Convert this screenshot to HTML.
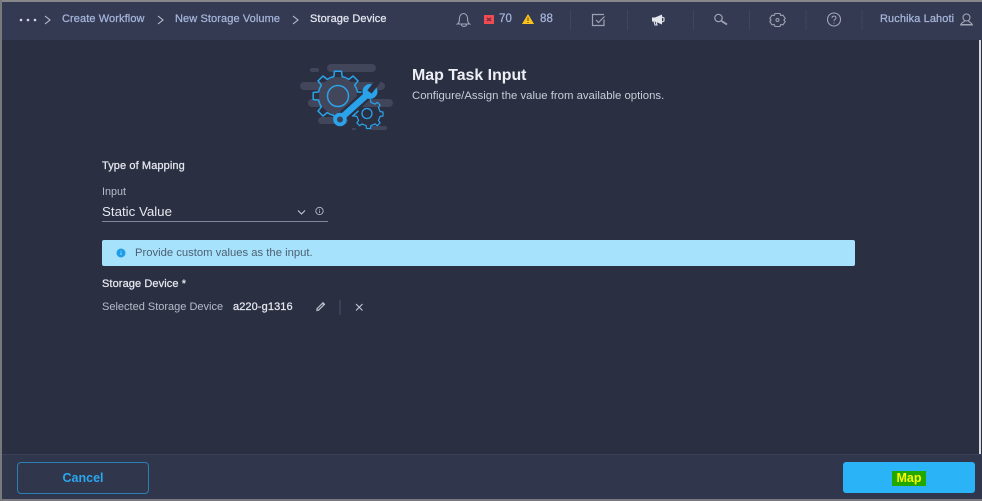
<!DOCTYPE html>
<html>
<head>
<meta charset="utf-8">
<style>
html,body{margin:0;padding:0;background:#2a2f42;}
body{width:982px;height:501px;position:relative;overflow:hidden;font-family:"Liberation Sans",sans-serif;}
.a{position:absolute;white-space:nowrap;line-height:1;}
.m{font-size:11px;letter-spacing:.1px;-webkit-text-stroke:.25px currentColor;}
svg{position:absolute;overflow:visible;}
</style>
</head>
<body>
<div class="a" style="left:0;top:0;width:982px;height:40px;background:#343a52;"></div>
<div class="a" style="left:0;top:454px;width:982px;height:47px;background:#30364b;"></div>
<div class="a" style="left:0;top:454px;width:982px;height:1px;background:#3a4057;"></div>
<div class="a" style="left:979px;top:40px;width:2px;height:414px;background:#d5d7dc;"></div>
<div class="a" style="left:0;top:0;width:982px;height:2px;background:#85878a;"></div>
<div class="a" style="left:0;top:0;width:2px;height:501px;background:#77797d;"></div>
<div class="a" style="left:0;top:499px;width:982px;height:2px;background:#77797d;"></div>

<!-- breadcrumb -->
<svg style="left:0;top:0" width="400" height="40" fill="none">
<circle cx="21" cy="20" r="1.3" fill="#d5d9e6"/><circle cx="28" cy="20" r="1.3" fill="#d5d9e6"/><circle cx="35" cy="20" r="1.3" fill="#d5d9e6"/>
<path d="M45 16l5 4-5 4M158 16l5 4-5 4M293 16l5 4-5 4" stroke="#b9bfd0" stroke-width="1.1"/>
</svg>
<div class="a m" style="left:62px;top:14px;color:#a5b5da;">Create Workflow</div>
<div class="a m" style="left:175px;top:14px;color:#a5b5da;">New Storage Volume</div>
<div class="a m" style="left:310px;top:14px;color:#e4e7f0;">Storage Device</div>

<!-- top icons -->
<svg style="left:0;top:0" width="982" height="40" fill="none">
<g stroke="#a1a6b6" stroke-width="1.1">
<path d="M457.500 24c1.500-1 2-2.500 2-6 0-2.500 2-4.500 4-4.500s4 2 4 4.500c0 3.500 .5 5 2 6z"/>
<path d="M461.500 24.500c0 2.500 5 2.500 5 0"/>
</g>
<rect x="484" y="15" width="10" height="9" fill="#ef4b52"/>
<path d="M487 18l4 3M491 18l-4 3" stroke="#6e2a3a" stroke-width="1.300"/>
<path d="M528 14l6 10h-12z" fill="#fcc419"/>
<path d="M528 17.500v3.500M528 22v1" stroke="#5b4a1a" stroke-width="1.100"/>
<path d="M570.500 10v20M627.500 10v20M693.500 10v20M749.500 10v20M806 10v20M862 10v20" stroke="#40465d" stroke-width="1"/>
<path d="M604 14.500h-11.500v11h11.500v-6" stroke="#9da2b2" stroke-width="1.200"/>
<path d="M596 20l2.500 2.500 6-6" stroke="#9da2b2" stroke-width="1.200"/>
<path d="M652 17.500h3l7-3v10l-7-3h-3z" fill="#e4e6ec"/>
<path d="M654 21.500l1 3.500h2l-1-3.500M662 17l2 1v3l-2 1" stroke="#e4e6ec" stroke-width="1.100"/>
<circle cx="718.500" cy="18" r="3.700" stroke="#a1a6b6" stroke-width="1.200"/>
<path d="M721.500 21l5.500 3.500" stroke="#a1a6b6" stroke-width="1.800"/>
<path d="M775 13.500h5l.8 2 2.200-.3 2.200 3.300-1.300 1.500 1.300 1.500-2.200 3.300-2.200-.3-.8 2h-5l-.8-2-2.200.3-2.200-3.300 1.300-1.500-1.300-1.500 2.200-3.300 2.200.3z" stroke="#9da2b2" stroke-width="1.100"/>
<circle cx="777.500" cy="20" r="1.500" stroke="#9da2b2"/>
<circle cx="834" cy="19.500" r="6.500" stroke="#a1a6b6" stroke-width="1.100"/>
<path d="M832 18c0-2.500 4-2.500 4 0 0 1.500-2 1.500-2 3M834 22.500v1" stroke="#a1a6b6" stroke-width="1"/>
<circle cx="966.500" cy="17.500" r="3.500" stroke="#a1a6b6" stroke-width="1.100"/>
<path d="M964.500 20.500c0 2-3.500 2-3.500 4h11c0-2-3.500-2-3.500-4M960 25h13" stroke="#a1a6b6" stroke-width="1.100"/>
</svg>
<div class="a m" style="left:499px;top:14px;font-size:11.500px;color:#a5b5da;">70</div>
<div class="a m" style="left:540px;top:14px;font-size:11.500px;color:#a5b5da;">88</div>
<div class="a m" style="left:880px;top:14px;color:#a5b5da;">Ruchika Lahoti</div>

<!-- hero icon -->
<svg style="left:290px;top:55px" width="120" height="85" fill="none">
<g fill="#41465a">
<rect x="37" y="9" width="49" height="8" rx="4"/>
<rect x="20" y="13" width="9" height="4" rx="2"/>
<rect x="10" y="27" width="85" height="8" rx="4"/>
<rect x="18" y="44" width="85" height="8" rx="4"/>
<rect x="28" y="62" width="30" height="7" rx="3.500"/>
<rect x="80" y="71" width="17" height="4" rx="2"/>
<rect x="62" y="73" width="4" height="2" rx="1"/>
<circle cx="48" cy="41" r="19"/>
</g>
<!-- large gear -->
<g transform="translate(48 41)" stroke="#2ba3ea" stroke-width="1.500" stroke-linejoin="round">
<path d="M-7.600-18.400L-4.100-19.400-3.500-24.800 3.500-24.800 4.100-19.400 7.600-18.400"/>
<path transform="rotate(45)" d="M-7.600-18.400L-4.100-19.400-3.500-24.800 3.500-24.800 4.100-19.400 7.600-18.400"/>
<path transform="rotate(90)" d="M-7.600-18.400L-4.100-19.400-3.500-24.800 3.500-24.800 4.100-19.400 7.600-18.400"/>
<path transform="rotate(135)" d="M-7.600-18.400L-4.100-19.400-3.500-24.800 3.500-24.800 4.100-19.400 7.600-18.400"/>
<path transform="rotate(180)" d="M-7.600-18.400L-4.100-19.400-3.500-24.800 3.500-24.800 4.100-19.400 7.600-18.400"/>
<path transform="rotate(225)" d="M-7.600-18.400L-4.100-19.400-3.500-24.800 3.500-24.800 4.100-19.400 7.600-18.400"/>
<path transform="rotate(270)" d="M-7.600-18.400L-4.100-19.400-3.500-24.800 3.500-24.800 4.100-19.400 7.600-18.400"/>
<path transform="rotate(315)" d="M-7.600-18.400L-4.100-19.400-3.500-24.800 3.500-24.800 4.100-19.400 7.600-18.400"/>
</g>
<circle cx="48" cy="41" r="10.500" stroke="#2ba3ea" stroke-width="1.500"/>
<!-- small gear -->
<g transform="translate(78.500 59)" stroke="#2ba3ea" stroke-width="1.200" stroke-linejoin="round">
<path d="M-4.500-10.800L-2.400-11.600-2-14.500 2-14.500 2.400-11.600 4.500-10.800"/>
<path transform="rotate(45)" d="M-4.500-10.800L-2.400-11.600-2-14.500 2-14.500 2.400-11.600 4.500-10.800"/>
<path transform="rotate(90)" d="M-4.500-10.800L-2.400-11.600-2-14.500 2-14.500 2.400-11.600 4.500-10.800"/>
<path transform="rotate(135)" d="M-4.500-10.800L-2.400-11.600-2-14.500 2-14.500 2.400-11.600 4.500-10.800"/>
<path transform="rotate(180)" d="M-4.500-10.800L-2.400-11.600-2-14.500 2-14.500 2.400-11.600 4.500-10.800"/>
<path transform="rotate(225)" d="M-4.500-10.800L-2.400-11.600-2-14.500 2-14.500 2.400-11.600 4.500-10.800"/>
<path transform="rotate(270)" d="M-4.500-10.800L-2.400-11.600-2-14.500 2-14.500 2.400-11.600 4.500-10.800"/>
<path transform="rotate(315)" d="M-4.500-10.800L-2.400-11.600-2-14.500 2-14.500 2.400-11.600 4.500-10.800"/>
</g>
<circle cx="77" cy="58.500" r="5" stroke="#2ba3ea" stroke-width="1.300"/>
<!-- wrench -->
<path d="M50 64L79 38" stroke="#2a2f42" stroke-width="11"/>
<path d="M50 64L79 38" stroke="#2ba3ea" stroke-width="6.500"/>
<circle cx="50" cy="64.500" r="6.800" fill="#2ba3ea"/>
<circle cx="50" cy="64.500" r="3" fill="#3b4258"/>
<circle cx="80" cy="36.500" r="7.500" fill="#2ba3ea"/>
<path d="M79.500 37L88 26" stroke="#2a2f42" stroke-width="5.500"/>
</svg>

<div class="a" style="left:412px;top:68px;font-size:15.900px;font-weight:bold;color:#eef0f5;">Map Task Input</div>
<div class="a" style="left:412px;top:91px;font-size:11.350px;color:#c9cdd8;">Configure/Assign the value from available options.</div>

<div class="a m" style="left:102px;top:161px;color:#e6e8ee;">Type of Mapping</div>
<div class="a" style="left:102px;top:187px;font-size:10.800px;color:#b8bcc9;">Input</div>
<div class="a" style="left:102px;top:205px;font-size:13.300px;color:#e6e8ee;">Static Value</div>
<div class="a" style="left:102px;top:221px;width:226px;height:1px;background:#81869a;"></div>

<div class="a" style="left:102px;top:240px;width:753px;height:26px;background:#a6e2fb;border-radius:2px;"></div>
<div class="a" style="left:135px;top:247.500px;font-size:11.250px;color:#4e5f73;">Provide custom values as the input.</div>

<svg style="left:0;top:0" width="982" height="501" fill="none">
<path d="M298 210.500l3.500 3.500 3.500-3.500" stroke="#c5c8d3" stroke-width="1.100"/>
<circle cx="319.500" cy="211" r="3.700" stroke="#b5b9c6" stroke-width=".9"/>
<path d="M319.500 210.500v2.500M319.500 209v.8" stroke="#b5b9c6" stroke-width=".8"/>
<circle cx="121" cy="253" r="4.500" fill="#1f9de8"/>
<path d="M121 252.500v2.500M121 250.700v.8" stroke="#a8e1fb" stroke-width=".9"/>
<path d="M317 310.500l1.500-.3 6-6-1.500-1.500-6 6zM322.500 303.500l1.500 1.500" stroke="#bdc0cb" stroke-width="1.200"/>
<path d="M340 300v15" stroke="#4d5267" stroke-width="1"/>
<path d="M356 304l6.500 6.500M362.500 304l-6.500 6.500" stroke="#c5c8d3" stroke-width="1.100"/>
</svg>

<div class="a m" style="left:102px;top:279px;color:#e6e8ee;">Storage Device *</div>
<div class="a" style="left:102px;top:301.500px;font-size:11px;color:#b8bcc9;">Selected Storage Device</div>
<div class="a m" style="left:233px;top:301.500px;color:#e6e8ee;">a220-g1316</div>

<div class="a" style="left:17px;top:462px;width:130px;height:30px;border:1px solid #2b7fb3;border-radius:4px;"></div>
<div class="a" style="left:17px;top:471.500px;width:132px;text-align:center;font-size:12.500px;font-weight:bold;color:#2aa7ee;">Cancel</div>

<div class="a" style="left:843px;top:462px;width:132px;height:31px;background:#2bb3f8;border-radius:3px;"></div>
<div class="a" style="left:892px;top:471px;width:34px;height:15px;background:#22a800;"></div>
<div class="a" style="left:892px;top:472px;width:34px;text-align:center;font-size:12.500px;font-weight:bold;color:#f8f800;">Map</div>
</body>
</html>
